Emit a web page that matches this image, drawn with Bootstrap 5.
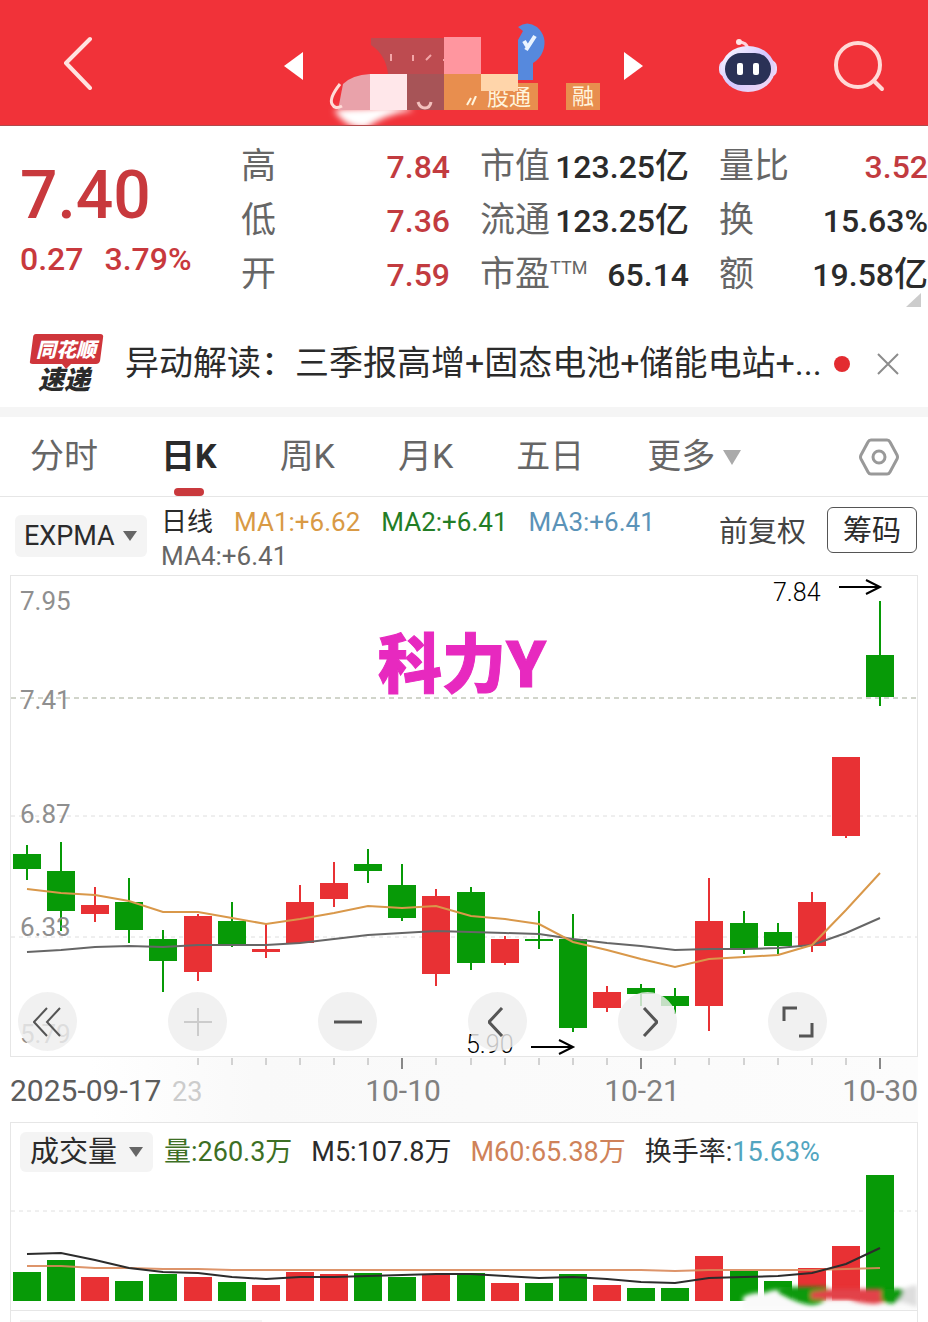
<!DOCTYPE html>
<html lang="zh-CN">
<head>
<meta charset="utf-8">
<meta name="viewport" content="width=device-width, initial-scale=1">
<title>个股行情 日K</title>
<link href="https://cdn.jsdelivr.net/npm/bootstrap@5.3.0/dist/css/bootstrap.min.css" rel="stylesheet">
<style>
  :root { --up: #e83134; --down: #079a07; --ink: #2b2b2b; --soft: #666; --line: #e6e6e6; }
  body { font-family: Roboto, "Noto Sans CJK SC", sans-serif; color: var(--ink); background: #fff; overflow-x: hidden; }
  button { border: 0; background: none; padding: 0; color: inherit; }
  svg { display: block; }
  select { appearance: none; border: 0; color: var(--ink); border-radius: 6px;
    background: #f4f4f4 url("data:image/svg+xml,%3Csvg xmlns='http://www.w3.org/2000/svg' viewBox='0 0 16 12'%3E%3Cpath d='M1 1h14L8 11z' fill='%23666'/%3E%3C/svg%3E") no-repeat right 9px center / 16px 12px; }

  .topbar { background: #f13239; height: 126px; border-bottom: 1px solid #b04a4c; }
  .topbar .side { width: calc(50% - 180px); padding-top: 6px; }
  .topbar .tools { gap: 54px; padding-right: 43px; }
  .back { margin-left: 62px; }
  .stock-title { width: 360px; height: 126px; }

  .quote { display: grid; grid-template-columns: 211px 1fr 1fr 1fr; column-gap: 30px; padding: 14px 0 18px; }
  .price { padding: 20px 0 0 20px; color: #c8393d; font-weight: 500; }
  .price-now { font-size: 66px; line-height: 72px; }
  .price-diff { font-size: 32px; line-height: 54px; gap: 21px; }
  .stat > div { height: 54px; white-space: nowrap; }
  .stat dt { font-weight: 400; font-size: 35px; line-height: 54px; color: var(--soft); }
  .stat dd { font-weight: 500; font-size: 32px; line-height: 54px; margin: 0; }
  .stat .ttm { font-size: 18px; vertical-align: 12px; line-height: 1; }
  .stat .unit { font-size: 34px; line-height: 1; }
  .rise { color: #c23b3f; }
  .corner { right: 7px; bottom: 13px; }

  .news { height: 87px; padding: 0 29px; }
  .news svg { overflow: visible; }
  .news a { font-size: 34px; line-height: 51px; color: var(--ink); margin-left: 21px; }
  .dot { width: 16px; height: 16px; border-radius: 50%; background: #e32b30; margin-left: 12px; }
  .band { height: 10px; background: #f5f5f5; }

  .periods { height: 80px; border-bottom: 1px solid var(--line); padding: 0 29px 0 30px; gap: 63px; font-size: 34px; color: var(--soft); }
  .periods button { height: 79px; white-space: nowrap; position: relative; }
  .periods .on { color: var(--ink); font-weight: 700; }
  .periods .on::after { content: ""; position: absolute; left: 50%; bottom: 0; width: 30px; height: 8px; margin-left: -15px; border-radius: 4px; background: #c9393d; }

  .legend-row { height: 78px; padding: 0 11px 0 15px; }
  .pick-line { width: 132px; height: 42px; padding: 0 9px; font-size: 27px; }
  .ma { font-size: 26px; line-height: 34px; column-gap: 21px; margin-left: 14px; padding-top: 5px; width: 530px; }
  .adjust { font-size: 29px; color: #444; margin-right: 21px; }
  .right-set { padding-bottom: 12px; }
  .right-set .adjust { padding-top: 6px; }
  .chips { width: 90px; height: 46px; border: 1px solid #555; border-radius: 6px; font-size: 29px; line-height: 46px; }

  .panel { margin: 0 10px; border: 1px solid var(--line); }
  .controls { left: 7px; bottom: 5px; right: 7px; gap: 91px; }
  .controls button { width: 59px; height: 59px; flex: none; border-radius: 50%; background: rgba(238,238,238,.82); display: grid; place-items: center; }
  .dates { margin: 0 10px; }
  .pick-vol { width: 133px; height: 40px; padding: 0 10px; font-size: 29px; line-height: 40px; margin-right: 11px; }
  .vol-head { height: 50px; padding: 8px 0 0 9px; font-size: 27px; }
  .vol-head span { margin-right: 19px; white-space: nowrap; }
  .next-panel { border-top: 0; height: 12px; padding: 9px 0 0 9px; overflow: hidden; }
  .next-panel div { width: 242px; height: 40px; background: #f4f4f4; }
</style>
</head>
<body>

<header class="topbar d-flex align-items-center">
  <div class="side">
    <button type="button" class="back" aria-label="返回">
      <svg width="32" height="56" viewBox="0 0 32 56" fill="none" stroke="#ffe3e0" stroke-width="4" stroke-linecap="round" stroke-linejoin="round"><path d="M28 5 4 29 28 54"/></svg>
    </button>
  </div>
  <svg class="stock-title" viewBox="284 0 360 126" role="img" aria-label="沪股通 融">
    <defs>
      <filter id="haze" x="-30%" y="-30%" width="160%" height="160%"><feGaussianBlur stdDeviation="3"/></filter>
      <clipPath id="barclip"><rect x="284" y="0" width="360" height="125"/></clipPath>
    </defs>
    <path d="M284 66 303 52V80Z" fill="#fff"/>
    <path d="M643 66 624 52V80Z" fill="#fff"/>
    <path d="M371 38H444V74H388Q386 55 371 45Z" fill="#bd4b50"/>
    <g stroke="#f3a6a8" stroke-width="2" fill="none"><path d="M391 54v7M413 55v6M426 60l5-5M443 60h6"/></g>
    <path d="M518 27Q527 20 537 27 548 37 543 51 540 59 533 63V80H518V40L523 31Z" fill="#5689dd"/>
    <path d="M524 41l3 5M526 50L535 36" stroke="#eaf4ff" stroke-width="4" fill="none"/>
    <rect x="444" y="37" width="37" height="37" fill="#ff969f"/>
    <rect x="444" y="83" width="94" height="27" fill="#e88e4e"/>
    <path d="M467 105l4-7M472 105l4-9" stroke="#fff4dc" stroke-width="2"/>
    <text x="487" y="105" font-size="22" fill="#fff4dc">股通</text>
    <rect x="444" y="74" width="37" height="22" fill="#e88e4e"/>
    <rect x="481" y="74" width="37" height="17" fill="#ffd5aa"/>
    <g clip-path="url(#barclip)">
      <path d="M334 110Q345 108 366 108 400 104 414 110 385 114 366 128 346 129 334 110Z" fill="#fff" filter="url(#haze)"/>
    </g>
    <path d="M343 84Q352 75 370 74V110H338Z" fill="#e9a2aa"/>
    <rect x="370" y="74" width="37" height="36" fill="#ffe7ea"/>
    <rect x="407" y="74" width="37" height="36" fill="#a75457"/>
    <path d="M418 102q2 6 7 6t6-6" stroke="#f3c1bd" stroke-width="3" fill="none"/>
    <path d="M340 84Q329 98 332 104 335 110 342 106" stroke="#ffdcd8" stroke-width="3" fill="none"/>
    <rect x="566" y="83" width="34" height="27" fill="#e88e4e"/>
    <text x="572" y="104" font-size="22" fill="#fff4dc">融</text>
  </svg>
  <div class="side tools d-flex align-items-center justify-content-end">
    <button type="button" aria-label="智能助手">
      <svg width="62" height="58" viewBox="0 0 62 58">
        <defs><linearGradient id="shell" x1="0" x2="1" y1="0" y2="1"><stop offset="0" stop-color="#fff"/><stop offset=".5" stop-color="#d4c8ff"/><stop offset="1" stop-color="#f7dcf0"/></linearGradient></defs>
        <path d="M21 5q9 0 10 7" fill="none" stroke="#ffd4dc" stroke-width="3"/><circle cx="22" cy="5" r="3" fill="#ffe4e6"/>
        <rect x="2" y="23" width="58" height="17" rx="7" fill="#ead9fa"/>
        <ellipse cx="31" cy="32" rx="27" ry="23" fill="url(#shell)"/>
        <rect x="8" y="16" width="46" height="32" rx="16" fill="#2a3156"/>
        <rect x="20" y="26" width="6" height="12" rx="2" fill="#fff"/><rect x="36" y="26" width="6" height="12" rx="2" fill="#fff"/>
      </svg>
    </button>
    <button type="button" aria-label="搜索">
      <svg width="52" height="52" viewBox="0 0 52 52" fill="none" stroke="#ffd9d6" stroke-width="4" stroke-linecap="round"><circle cx="25" cy="25" r="22"/><path d="M41 41l8 8"/></svg>
    </button>
  </div>
</header>

<section class="quote position-relative">
  <div class="price">
    <div class="price-now">7.40</div>
    <div class="price-diff d-flex"><span>0.27</span><span>3.79%</span></div>
  </div>
  <dl class="stat mb-0">
    <div class="d-flex justify-content-between"><dt>高</dt><dd class="rise">7.84</dd></div>
    <div class="d-flex justify-content-between"><dt>低</dt><dd class="rise">7.36</dd></div>
    <div class="d-flex justify-content-between"><dt>开</dt><dd class="rise">7.59</dd></div>
  </dl>
  <dl class="stat mb-0">
    <div class="d-flex justify-content-between"><dt>市值</dt><dd>123.25<span class="unit">亿</span></dd></div>
    <div class="d-flex justify-content-between"><dt>流通</dt><dd>123.25<span class="unit">亿</span></dd></div>
    <div class="d-flex justify-content-between"><dt>市盈<span class="ttm">TTM</span></dt><dd>65.14</dd></div>
  </dl>
  <dl class="stat mb-0">
    <div class="d-flex justify-content-between"><dt>量比</dt><dd class="rise">3.52</dd></div>
    <div class="d-flex justify-content-between"><dt>换</dt><dd>15.63%</dd></div>
    <div class="d-flex justify-content-between"><dt>额</dt><dd>19.58<span class="unit">亿</span></dd></div>
  </dl>
  <svg class="corner position-absolute" width="15" height="14" viewBox="0 0 15 14"><path d="M15 0V14H0Z" fill="#ccc"/></svg>
</section>

<section class="news d-flex align-items-center">
  <svg width="75" height="62" viewBox="0 0 75 62" class="flex-shrink-0" role="img" aria-label="同花顺速递">
    <path d="M7 1H71Q75 1 74 5L71 28Q70 31 67 31H42L37 36 33 31H4Q0 31 1 28L4 5Q4 1 7 1Z" fill="#cf353b"/>
    <text x="37" y="24" text-anchor="middle" font-size="20" font-weight="900" font-style="italic" fill="#fff">同花顺</text>
    <text x="35" y="56" text-anchor="middle" font-size="26" font-weight="900" font-style="italic" fill="#2b2b2b">速递</text>
  </svg>
  <a href="#" class="text-decoration-none text-nowrap">异动解读：三季报高增+固态电池+储能电站+...</a>
  <span class="dot flex-shrink-0"></span>
  <button type="button" class="ms-auto" aria-label="关闭">
    <svg width="22" height="22" viewBox="0 0 22 22" stroke="#8c8c8c" stroke-width="2"><path d="M1 1 21 21M21 1 1 21"/></svg>
  </button>
</section>
<div class="band"></div>

<nav class="periods d-flex align-items-center">
  <button type="button">分时</button>
  <button type="button" class="on">日K</button>
  <button type="button">周K</button>
  <button type="button">月K</button>
  <button type="button">五日</button>
  <button type="button" class="d-flex align-items-center">更多<svg class="ms-2" width="18" height="16" viewBox="0 0 18 16"><path d="M0 1H18L9 16Z" fill="#aaa"/></svg></button>
  <button type="button" class="ms-auto" aria-label="设置">
    <svg width="40" height="40" viewBox="0 0 40 40" fill="none" stroke="#999" stroke-width="3" stroke-linejoin="round"><path d="M12 3H28Q30 3 31 5L38 18Q39 20 38 22L31 35Q30 37 28 37H12Q10 37 9 35L2 22Q1 20 2 18L9 5Q10 3 12 3Z"/><circle cx="20" cy="20" r="6"/></svg>
  </button>
</nav>

<section class="legend-row d-flex align-items-center">
  <select class="pick-line flex-shrink-0" aria-label="主图指标"><option>EXPMA</option></select>
  <div class="ma d-flex flex-wrap align-items-center">
    <span>日线</span>
    <span style="color:#d99a45">MA1:+6.62</span>
    <span style="color:#237d26">MA2:+6.41</span>
    <span style="color:#5b93b8">MA3:+6.41</span>
    <span style="color:#666">MA4:+6.41</span>
  </div>
  <div class="right-set ms-auto d-flex align-items-center">
    <button type="button" class="adjust text-nowrap">前复权</button>
    <button type="button" class="chips flex-shrink-0">筹码</button>
  </div>
</section>

<section class="panel position-relative">
  <svg id="kline" class="w-100" viewBox="0 0 906 480">
    <g fill="none">
      <path d="M0 122H906" stroke="#a3aa96" stroke-dasharray="5 4"/>
      <path d="M0 240H906M0 361H906" stroke="#dedede" stroke-dasharray="4 4"/>
    </g>
    <g id="candles"></g>
    <path id="slow" fill="none" stroke="#666" stroke-width="2"/>
    <path id="fast" fill="none" stroke="#d9984a" stroke-width="2"/>
    <g font-size="26" fill="#8f8f8f">
      <text x="9" y="34">7.95</text><text x="9" y="133">7.41</text><text x="9" y="247">6.87</text><text x="9" y="360">6.33</text><text x="9" y="467">5.79</text>
    </g>
    <g font-size="25" font-weight="300" fill="#000"><text x="762" y="25">7.84</text><text x="455" y="477">5.90</text></g>
    <g fill="none" stroke="#000" stroke-width="2"><path d="M828 11H868M855 4 869 11 855 18"/><path d="M520 471H561M548 464 562 471 548 478"/></g>
    <text x="367" y="111" font-size="64" font-weight="900" fill="#e729bf" stroke="#e729bf" stroke-width="1">科力Y</text>
  </svg>
  <div class="controls position-absolute d-flex">
    <button type="button" aria-label="快退"><svg width="30" height="30" viewBox="0 0 30 30" fill="none" stroke="#555" stroke-width="2"><path d="M14 1 1 15 14 29M27 1 14 15 27 29"/></svg></button>
    <button type="button" aria-label="放大"><svg width="28" height="28" viewBox="0 0 28 28" stroke="#ccc" stroke-width="2"><path d="M14 0V28M0 14H28"/></svg></button>
    <button type="button" aria-label="缩小"><svg width="28" height="28" viewBox="0 0 28 28" stroke="#555" stroke-width="3"><path d="M0 14H28"/></svg></button>
    <button type="button" aria-label="左移"><svg width="20" height="30" viewBox="0 0 20 30" fill="none" stroke="#555" stroke-width="3"><path d="M14 1 1 15 14 29"/></svg></button>
    <button type="button" aria-label="右移"><svg width="20" height="30" viewBox="0 0 20 30" fill="none" stroke="#555" stroke-width="3"><path d="M6 1 19 15 6 29"/></svg></button>
    <button type="button" aria-label="全屏"><svg width="32" height="32" viewBox="0 0 32 32" fill="none" stroke="#555" stroke-width="3"><path d="M2 15V2H15M30 17V30H17"/></svg></button>
  </div>
</section>

<div class="dates">
  <svg class="w-100" viewBox="0 0 908 65">
    <defs><linearGradient id="fade"><stop offset="0" stop-color="#fff"/><stop offset=".2" stop-color="#f9f9f9"/><stop offset="1" stop-color="#fcfcfc"/></linearGradient></defs>
    <rect x="80" width="828" height="65" fill="url(#fade)"/>
    <g id="ticks" stroke="#aaa"></g>
    <g font-size="30" fill="#808080">
      <text x="0" y="44" fill="#5c5c5c">2025-09-17</text>
      <text x="162" y="44" font-size="27" fill="#ccc">23</text>
      <text x="393" y="44" text-anchor="middle">10-10</text>
      <text x="632" y="44" text-anchor="middle">10-21</text>
      <text x="908" y="44" text-anchor="end">10-30</text>
    </g>
  </svg>
</div>

<section class="panel">
  <div class="vol-head d-flex align-items-center">
    <select class="pick-vol flex-shrink-0" aria-label="副图指标"><option>成交量</option></select>
    <span style="color:#3d6f24">量:260.3万</span>
    <span>M5:107.8万</span>
    <span style="color:#cf8259">M60:65.38万</span>
    <span>换手率:<b class="fw-normal" style="color:#52a5c0">15.63%</b></span>
  </div>
  <svg class="w-100" viewBox="0 0 906 137">
    <defs><filter id="smear" x="-10%" y="-60%" width="120%" height="220%"><feGaussianBlur stdDeviation="2"/></filter></defs>
    <path d="M0 38H906" stroke="#e0e0e0" stroke-dasharray="4 4"/>
    <g id="volumes"></g>
    <path id="m60" fill="none" stroke="#d9885a" stroke-opacity=".9" stroke-width="2"/>
    <path id="m5" fill="none" stroke="#2c2c2c" stroke-width="2"/>
    <path d="M732 137V124Q742 119 754 120 766 114 776 120 784 126 800 126L906 126V137Z" fill="#fafafa" filter="url(#smear)"/>
    <g filter="url(#smear)">
      <path d="M880 128Q888 114 906 112V134Q892 128 880 128Z" fill="#ddd"/>
      <path d="M768 114H816V124Q811 132 800 132 788 131 768 120Z" fill="#079a07"/>
      <path d="M822 116H884Q878 131 862 131 846 130 838 126L800 126V119Z" fill="#e24348"/>
      <path d="M870 116H892Q894 122 884 130 876 132 870 126Z" fill="#079a07"/>
    </g>
  </svg>
</section>
<section class="panel next-panel"><div></div></section>

<script src="https://cdn.jsdelivr.net/npm/bootstrap@5.3.0/dist/js/bootstrap.bundle.min.js"></script>
<script>
  const NS = 'http://www.w3.org/2000/svg';
  const GREEN = '#079a07', RED = '#e83134';
  const xAt = i => Math.round(16 + i * 34.12);
  const add = (id, tag, attrs) => {
    const el = document.createElementNS(NS, tag);
    for (const k in attrs) el.setAttribute(k, attrs[k]);
    document.getElementById(id).appendChild(el);
  };
  const trace = (id, ys) => document.getElementById(id).setAttribute('d', 'M' + ys.map((y, i) => xAt(i) + ' ' + y).join('L'));

  // one row per day: high, body top, body bottom, low, rising (1) or falling (0), volume bar top
  const days = [
    [269,278,293,304,0,99],[266,295,335,355,0,87],[311,329,338,346,1,104],[302,326,354,367,0,108],
    [354,363,385,416,0,101],[338,340,396,405,1,104],[326,345,369,371,0,109],[348,373,376,382,1,112],
    [309,326,367,367,1,99],[286,307,323,331,1,101],[273,288,295,307,0,100],[288,309,342,345,0,104],
    [313,320,398,410,1,102],[311,316,387,394,0,100],[360,363,387,389,1,110],[335,363,365,373,0,110],
    [338,363,452,456,0,101],[410,416,432,436,1,112],[408,412,418,430,0,115],[412,420,430,438,0,115],
    [302,345,430,455,1,83],[335,347,373,378,0,98],[347,356,370,378,0,108],[316,326,370,376,1,95],
    [181,181,260,262,1,73],[25,79,121,130,0,2]
  ];
  days.forEach(([hi, top, bot, lo, up, vol], i) => {
    const x = xAt(i), c = up ? RED : GREEN;
    add('candles', 'rect', { x: x - 1, y: hi, width: 2, height: lo - hi, fill: c });
    add('candles', 'rect', { x: x - 14, y: top, width: 28, height: bot - top, fill: c });
    add('volumes', 'rect', { x: x - 14, y: vol, width: 28, height: 128 - vol, fill: c });
    if (i > 4) {
      const major = i === 11 || i === 18 || i === 25;
      add('ticks', 'path', { d: `M${x + 1} 1V${major ? 12 : 8}`, 'stroke-width': major ? 2 : 1, stroke: major ? '#888' : '#aaa' });
    }
  });
  trace('fast', [313,317,319,325,336,336,342,348,343,337,330,332,330,340,343,348,366,374,383,391,383,381,379,369,334,297]);
  trace('slow', [376,374,371,370,371,369,369,369,367,363,359,357,355,356,357,358,363,367,370,374,373,373,372,369,357,342]);
  trace('m5', [81,80,87,95,99,100,104,106,104,104,103,102,101,101,103,105,104,106,109,110,105,104,103,100,91,75]);
  trace('m60', [93,93,95,95,96,96,97,97,97,97,97,97,97,97,97,97,97,97,97,98,97,97,97,97,96,95]);
</script>
</body>
</html>
